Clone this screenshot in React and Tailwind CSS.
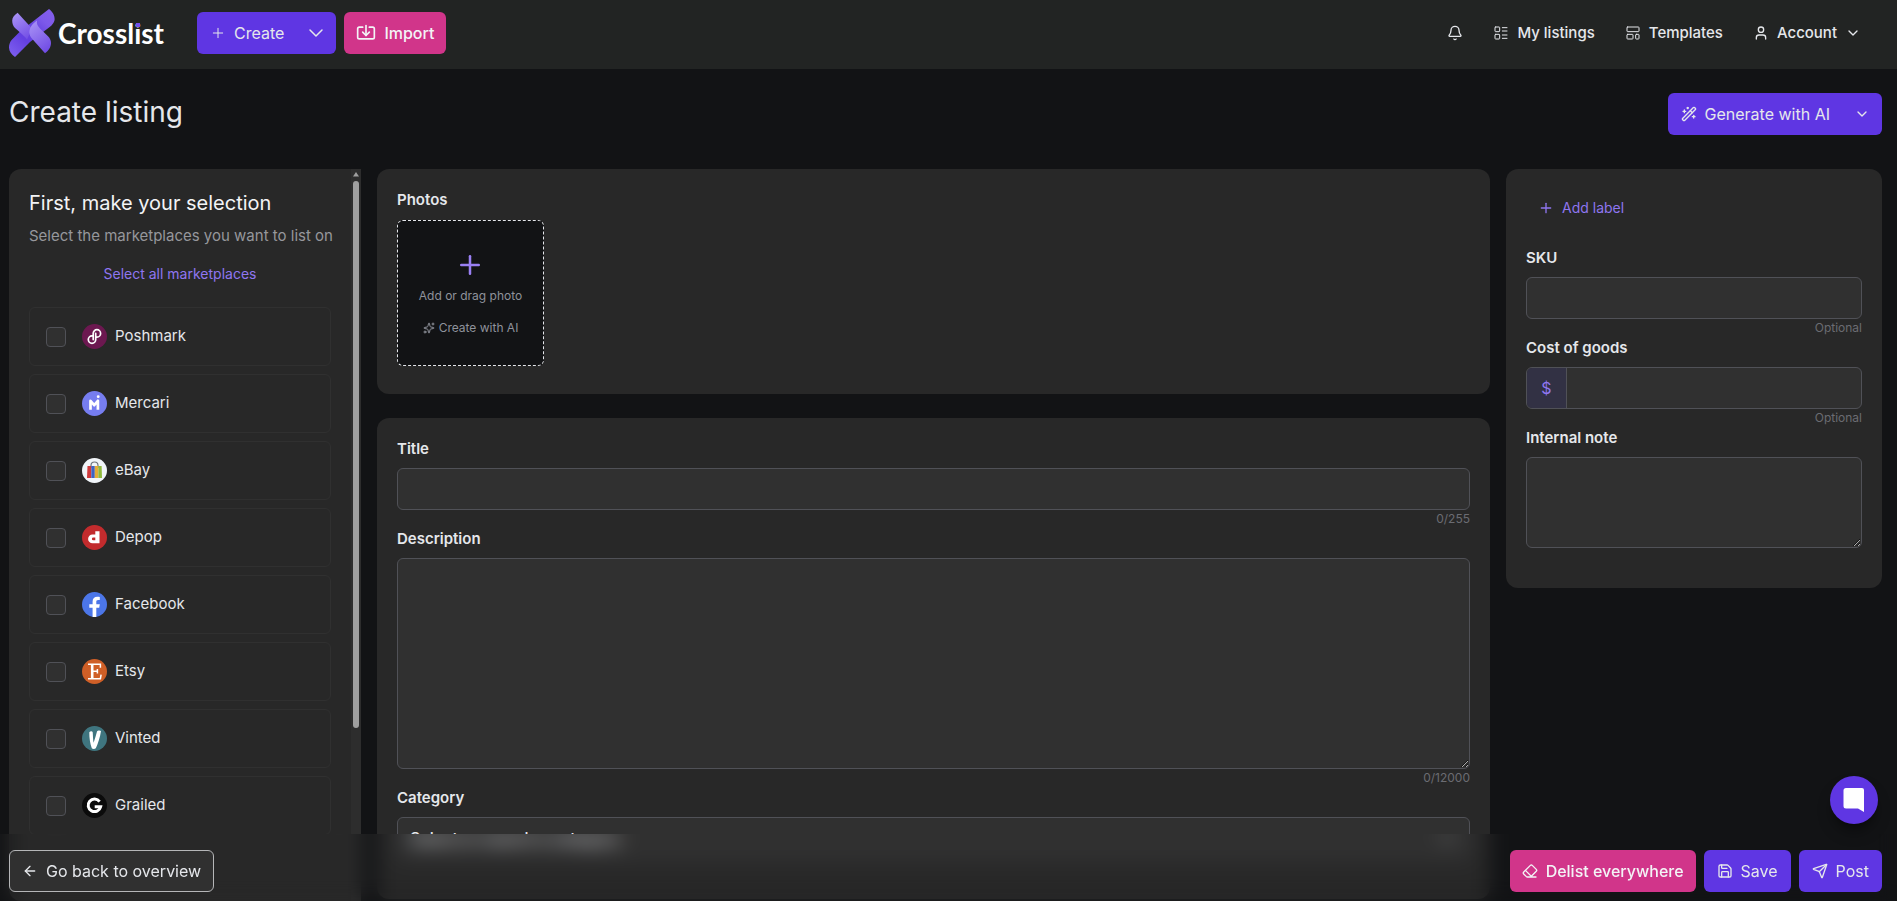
import { useState } from "react";
import {
  ArrowLeft,
  Bell,
  ChevronDown,
  Eraser,
  Import,
  LayoutList,
  LayoutTemplate,
  Plus,
  Save,
  Send,
  Sparkles,
  User,
  WandSparkles,
} from "lucide-react";

const marketplaces = [
  { id: "poshmark", label: "Poshmark", Icon: PoshmarkIcon },
  { id: "mercari", label: "Mercari", Icon: MercariIcon },
  { id: "ebay", label: "eBay", Icon: EbayIcon },
  { id: "depop", label: "Depop", Icon: DepopIcon },
  { id: "facebook", label: "Facebook", Icon: FacebookIcon },
  { id: "etsy", label: "Etsy", Icon: EtsyIcon },
  { id: "vinted", label: "Vinted", Icon: VintedIcon },
  { id: "grailed", label: "Grailed", Icon: GrailedIcon },
];

const fieldClass =
  "block w-full rounded-md border border-[#505157] bg-[#303030] px-3 text-base text-gray-200 outline-none focus:border-[#8f76f0]";

/* ---- marketplace icons ---- */
function PoshmarkIcon() {
  return (
    <svg viewBox="0 0 25 25" className="h-[25px] w-[25px] shrink-0" aria-hidden="true">
      <circle cx="12.5" cy="12.5" r="12.5" fill="#6c1850" />
      <g fill="none" stroke="#fff" strokeWidth="1.7" strokeLinecap="round">
        <path d="M11.2 15.6V9.4a3.7 3.7 0 1 1 3.7 3.7h-1" />
        <path d="M13.7 9.4v6.2a3.7 3.7 0 1 1-3.7-3.7h1" />
      </g>
    </svg>
  );
}

function MercariIcon() {
  return (
    <svg viewBox="0 0 25 25" className="h-[25px] w-[25px] shrink-0" aria-hidden="true">
      <circle cx="12.5" cy="12.5" r="12.5" fill="#767df0" />
      <path d="M8.5 18.7V9.8l3.7 4.4 3.7-4.4v8.9" fill="none" stroke="#fff" strokeWidth="2.7" strokeLinejoin="round" />
      <circle cx="16.2" cy="5.7" r="1.4" fill="#fff" />
    </svg>
  );
}

function EbayIcon() {
  return (
    <svg viewBox="0 0 25 25" className="h-[25px] w-[25px] shrink-0" aria-hidden="true">
      <circle cx="12.5" cy="12.5" r="12.5" fill="#f1f5f9" />
      <path d="M9 10V7.5a3.5 3.5 0 0 1 7 0V10" fill="none" stroke="#6f757c" strokeWidth="1.2" />
      <path d="M5.5 8H9.3v12H5z" fill="#cf3a3c" />
      <path d="M9.3 8h3.5v12H9.3z" fill="#3d62c4" />
      <path d="M12.8 8h3.6v12h-3.6z" fill="#e5ac37" />
      <path d="M16.4 8h3.2l.4 12h-3.6z" fill="#8fb93c" />
    </svg>
  );
}

function DepopIcon() {
  return (
    <svg viewBox="0 0 25 25" className="h-[25px] w-[25px] shrink-0" aria-hidden="true">
      <circle cx="12.5" cy="12.5" r="12.5" fill="#c22b2d" />
      <path
        fillRule="evenodd"
        fill="#fff"
        d="M13.3 6.3h4.2v12h-7a4.4 4.4 0 0 1 0-8.8h2.8zM11.3 12.5a1.4 1.4 0 0 0 0 2.8h2v-2.8z"
      />
    </svg>
  );
}

function FacebookIcon() {
  return (
    <svg viewBox="0 0 25 25" className="h-[25px] w-[25px] shrink-0" aria-hidden="true">
      <circle cx="12.5" cy="12.5" r="12.5" fill="#4c76e8" />
      <path
        fill="#fff"
        d="M10.6 25v-9.2H7.3v-3.5h3.3V9.5c0-3.1 1.8-4.7 4.7-4.7 1 0 2 .1 2.5.2v3.1h-1.6c-1.5 0-1.9.8-1.9 1.7v2.5h3.5l-.6 3.5h-2.9V25z"
      />
    </svg>
  );
}

function EtsyIcon() {
  return (
    <svg viewBox="0 0 25 25" className="h-[25px] w-[25px] shrink-0" aria-hidden="true">
      <circle cx="12.5" cy="12.5" r="12.5" fill="#cf5f27" />
      <g fill="none" stroke="#fff">
        <path d="M10.2 5v15" strokeWidth="2.6" />
        <path d="M6 5.3h12.4v3.4M6 19.7h12.4l.7-4M10 12.3h5.3M15.4 10v4.6" strokeWidth="1.5" />
      </g>
    </svg>
  );
}

function VintedIcon() {
  return (
    <svg viewBox="0 0 25 25" className="h-[25px] w-[25px] shrink-0" aria-hidden="true">
      <circle cx="12.5" cy="12.5" r="12.5" fill="#3f757f" />
      <path
        fill="#fff"
        d="M7.3 6.2c.9-1 3-1.2 3.4 0 .3 2.6.2 6.8.9 10.5 1.3-3.7 2.5-7.7 3.4-11.2.7-1.2 3-1.4 4-.5-.8 5.6-3 12.6-5.2 17.3-1.1 1-3.4.9-4-.1-1.6-4.5-2.6-10.5-2.5-16z"
      />
    </svg>
  );
}

function GrailedIcon() {
  return (
    <svg viewBox="0 0 25 25" className="h-[25px] w-[25px] shrink-0" aria-hidden="true">
      <circle cx="12.5" cy="12.5" r="12.5" fill="#0b0b0b" />
      <path fill="none" stroke="#fff" strokeWidth="3" d="M17.6 8.6a6.3 6.3 0 1 0 1 5.2h-5.9" />
    </svg>
  );
}

/* ---- logo ---- */
function Logo() {
  return (
    <a href="#home" className="flex items-center gap-[3px]">
      <svg viewBox="0 0 46 48" className="h-12 w-[46px]" aria-hidden="true">
        <defs>
          <linearGradient id="ribbonUp" x1="0" y1="48" x2="46" y2="0" gradientUnits="userSpaceOnUse">
            <stop offset="0" stopColor="#8062f0" />
            <stop offset=".35" stopColor="#6440e2" />
            <stop offset=".6" stopColor="#6a47e2" />
            <stop offset=".75" stopColor="#7d59ea" />
            <stop offset="1" stopColor="#8560ec" />
          </linearGradient>
          <linearGradient id="ribbonDown" x1="6" y1="6" x2="22" y2="30" gradientUnits="userSpaceOnUse">
            <stop offset="0" stopColor="#a68ff5" />
            <stop offset="1" stopColor="#6f4ae4" />
          </linearGradient>
          <linearGradient id="ribbonFront" x1="20" y1="16" x2="40" y2="42" gradientUnits="userSpaceOnUse">
            <stop offset="0" stopColor="#a68ff5" />
            <stop offset="1" stopColor="#6f4ae4" />
          </linearGradient>
        </defs>
        <path
          d="M40 0c3.5 2.5 6 6.5 5.6 11-.5 3-2.6 5-4.6 6.8L21 33 6 48C2.5 45.5 0 42.5 0 38.5c0-3 1-5.5 2.6-7.5L11 22.5z"
          fill="url(#ribbonUp)"
        />
        <path
          d="M8.6 3.7C5.5 6 3.3 8 3.2 11.5c0 3 1 5.5 2.8 7.5l6 5.3c2 1.9 4.5 3.7 6 6.2l5-11z"
          fill="url(#ribbonDown)"
        />
        <path
          d="M28 11.5c-4.5 3-7.5 7-7.7 12 .2 2.7 1.2 4.5 3 6.5L36 44.2c3.5-2.5 6-6 6-10.2 0-2.5-1-4.8-3-6.8l-8-7.7c-2.5-2.5-3.5-5-3-8z"
          fill="url(#ribbonFront)"
        />
      </svg>
      <span className="font-['Lato',sans-serif] text-[28px] font-bold leading-8 text-white">
        Crossl
        <span className="relative">
          i
          <span className="absolute left-1/2 top-[7px] h-1 w-1 -translate-x-1/2 bg-[#7450ea]" />
        </span>
        st
      </span>
    </a>
  );
}

function Navbar() {
  return (
    <header className="flex shrink-0 items-start justify-between bg-[#222423] pb-[15px] pl-[9px] pr-9 pt-3">
      <div className="flex h-[42px] items-center">
        <Logo />
        <div className="ml-[33px] flex h-full overflow-hidden rounded-md bg-[#5f36e3] text-gray-200">
          <button type="button" className="flex items-center gap-2 pl-[13px] pr-3 text-base">
            <Plus size={16} strokeWidth={1.5} />
            Create
          </button>
          <button type="button" aria-label="More create options" className="px-2">
            <ChevronDown size={24} strokeWidth={1.5} />
          </button>
        </div>
        <button
          type="button"
          className="ml-2 flex h-full items-center gap-2 rounded-md bg-[#d1358a] px-3 text-base font-medium text-gray-100"
        >
          <Import size={20} strokeWidth={2} />
          Import
        </button>
      </div>

      <nav className="flex h-[42px] items-center gap-[30px] text-[15px] font-medium text-gray-200">
        <button type="button" aria-label="Notifications">
          <Bell size={16} strokeWidth={2} />
        </button>
        <a href="#listings" className="flex items-center gap-2">
          <LayoutList size={16} strokeWidth={1.5} />
          My listings
        </a>
        <a href="#templates" className="flex items-center gap-2">
          <LayoutTemplate size={16} strokeWidth={1.5} />
          Templates
        </a>
        <button type="button" className="flex items-center gap-2">
          <User size={16} strokeWidth={2} />
          Account
          <ChevronDown size={16} strokeWidth={2} />
        </button>
      </nav>
    </header>
  );
}

function MarketplaceList() {
  const [selected, setSelected] = useState([]);

  const toggle = (id) =>
    setSelected((prev) => (prev.includes(id) ? prev.filter((x) => x !== id) : [...prev, id]));

  return (
    <aside className="flex h-full overflow-hidden rounded-l-xl bg-[#282828]">
      <div className="min-w-0 flex-1 p-5">
        <h2 className="text-xl leading-7 text-gray-100">First, make your selection</h2>
        <p className="mt-[7px] whitespace-nowrap text-[15px] leading-6 text-[#96979c]">
          Select the marketplaces you want to list on
        </p>
        <button
          type="button"
          onClick={() => setSelected(marketplaces.map((m) => m.id))}
          className="mt-3.5 block w-full text-center text-sm leading-6 text-[#8f76f0]"
        >
          Select all marketplaces
        </button>
        <ul className="mt-[21px] flex flex-col gap-2">
          {marketplaces.map(({ id, label, Icon }) => (
            <li key={id}>
              <label className="flex h-[59px] items-center rounded-md border border-[#303030] px-4 text-[15px] text-gray-200">
                <input
                  type="checkbox"
                  checked={selected.includes(id)}
                  onChange={() => toggle(id)}
                  className="h-5 w-5 appearance-none rounded border border-[#505157] bg-[#303030] checked:bg-[#5f36e3]"
                />
                <span className="ml-4 mr-2">
                  <Icon />
                </span>
                {label}
              </label>
            </li>
          ))}
        </ul>
      </div>

      {/* scroll track */}
      <div className="flex w-2.5 shrink-0 flex-col items-center bg-[#2d2d2d] pt-[3px]">
        <svg viewBox="0 0 6 5" className="h-[5px] w-1.5" aria-hidden="true">
          <path d="M3 0l3 4.5H0z" fill="#9f9f9f" />
        </svg>
        <div className="mt-1 h-[75%] w-1.5 rounded-full bg-[#9f9f9f]" />
      </div>
    </aside>
  );
}

function Label({ htmlFor, children }) {
  return (
    <label htmlFor={htmlFor} className="mb-2 block text-[15px] font-semibold leading-[22px] text-gray-200">
      {children}
    </label>
  );
}

function Hint({ children }) {
  return <p className="text-right text-xs leading-[18px] text-[#6b6c72]">{children}</p>;
}

function ListingForm() {
  const [title, setTitle] = useState("");
  const [description, setDescription] = useState("");

  return (
    <div className="flex min-w-0 flex-col gap-6">
      <section className="rounded-xl bg-[#282828] px-5 pb-7 pt-5">
        <h2 className="mb-[9px] text-[15px] font-semibold leading-[22px] text-gray-200">Photos</h2>
        <div className="flex h-[146px] w-[147px] flex-col items-center rounded-md border border-dashed border-gray-200 bg-[#121315] pt-[29px] text-xs text-[#8f929b]">
          <button type="button" className="flex flex-col items-center gap-2 leading-4">
            <Plus size={30} strokeWidth={2} className="text-[#9a80f4]" />
            Add or drag photo
          </button>
          <button type="button" className="mt-4 flex items-center gap-1 leading-4">
            <Sparkles size={12} strokeWidth={2} />
            Create with AI
          </button>
        </div>
      </section>

      <section className="rounded-xl bg-[#282828] px-5 pb-10 pt-5">
        <Label htmlFor="title">Title</Label>
        <input
          id="title"
          value={title}
          maxLength={255}
          onChange={(e) => setTitle(e.target.value)}
          className={`${fieldClass} h-[42px]`}
        />
        <Hint>{title.length}/255</Hint>

        <Label htmlFor="description">Description</Label>
        <textarea
          id="description"
          value={description}
          maxLength={12000}
          onChange={(e) => setDescription(e.target.value)}
          className={`${fieldClass} h-[211px] py-2`}
        />
        <Hint>{description.length}/12000</Hint>

        <Label htmlFor="category">Category</Label>
        <div className={`${fieldClass} flex h-[42px] items-center`}>
          <select
            id="category"
            className="h-full flex-1 appearance-none bg-transparent text-base font-medium text-gray-200 outline-none"
          >
            <option>Select or search a category</option>
          </select>
          <ChevronDown size={20} />
        </div>
      </section>
    </div>
  );
}

function DetailsPanel() {
  return (
    <section className="self-start rounded-xl bg-[#282828] px-5 pb-10 pt-5">
      <button type="button" className="mb-5 flex h-[38px] items-center gap-2 px-3 text-sm text-[#8f76f0]">
        <Plus size={16} strokeWidth={2} />
        Add label
      </button>

      <Label htmlFor="sku">SKU</Label>
      <input id="sku" className={`${fieldClass} h-[42px]`} />
      <Hint>Optional</Hint>

      <Label htmlFor="cost">Cost of goods</Label>
      <div className="flex h-[42px] overflow-hidden rounded-md border border-[#505157] bg-[#303030]">
        <span className="flex w-10 items-center justify-center border-r border-[#505157] bg-[#323144] text-base text-[#8f76f0]">
          $
        </span>
        <input id="cost" inputMode="decimal" className="min-w-0 flex-1 bg-transparent px-3 text-gray-200 outline-none" />
      </div>
      <Hint>Optional</Hint>

      <Label htmlFor="note">Internal note</Label>
      <textarea id="note" className={`${fieldClass} h-[91px] py-2`} />
    </section>
  );
}

function ActionBar() {
  return (
    <footer className="fixed inset-x-0 bottom-0 z-10">
      {/* reaches past the bar and is masked back to it, so the blur is at full strength up to its edge */}
      <div className="pointer-events-none absolute -inset-12 backdrop-blur-[10px] [mask-image:linear-gradient(to_bottom,transparent_48px,black_48px)]" />
      <div className="relative flex justify-between pb-[9px] pl-[9px] pr-[15px] pt-4 text-base">
        <button
          type="button"
          className="flex h-[42px] items-center gap-2 rounded-md border border-[#b5b6b8] bg-[#303030] px-3 text-gray-200"
        >
          <ArrowLeft size={16} strokeWidth={2} />
          Go back to overview
        </button>
        <div className="flex gap-2 text-gray-200">
          <button
            type="button"
            className="flex h-[42px] items-center gap-2 rounded-md bg-[#d1358a] px-3 font-medium text-gray-100"
          >
            <Eraser size={16} strokeWidth={2} />
            Delist everywhere
          </button>
          <button type="button" className="flex h-[42px] items-center gap-2 rounded-md bg-[#5f36e3] px-[13px]">
            <Save size={16} strokeWidth={2} />
            Save
          </button>
          <button type="button" className="flex h-[42px] items-center gap-2 rounded-md bg-[#5f36e3] px-[13px]">
            <Send size={16} strokeWidth={2} />
            Post
          </button>
        </div>
      </div>
    </footer>
  );
}

export default function App() {
  return (
    <div className="flex h-screen flex-col overflow-hidden bg-[#121315] font-['Inter',sans-serif]">
      <Navbar />

      <main className="flex min-h-0 flex-1 flex-col pl-[9px] pr-[15px] pt-6">
        <div className="mb-[34px] flex items-start justify-between">
          <h1 className="text-[28px] leading-[38px] text-gray-200">Create listing</h1>
          <div className="flex h-[42px] rounded-md bg-[#5f36e3] text-gray-200">
            <button type="button" className="flex items-center gap-2 pl-[13px] pr-3 text-base">
              <WandSparkles size={16} strokeWidth={2} />
              Generate with AI
            </button>
            <button type="button" aria-label="More AI options" className="px-3">
              <ChevronDown size={16} strokeWidth={2} />
            </button>
          </div>
        </div>

        <div className="grid min-h-0 flex-1 grid-cols-[352px_minmax(0,1fr)_376px] gap-4">
          <MarketplaceList />
          <ListingForm />
          <DetailsPanel />
        </div>
      </main>

      <ActionBar />

      {/* chat launcher */}
      <button
        type="button"
        aria-label="Open chat"
        className="fixed bottom-[77px] right-[19px] z-20 flex h-12 w-12 items-center justify-center rounded-full bg-[#5f36e3] shadow-lg shadow-black/40"
      >
        <svg viewBox="0 0 22 24" className="h-6 w-[22px]" aria-hidden="true">
          <path d="M3 0h16a2 2 0 0 1 2 2v22l-6-3.5H3A2.5 2.5 0 0 1 .5 18V2.5A2.5 2.5 0 0 1 3 0z" fill="#fff" />
        </svg>
      </button>
    </div>
  );
}
